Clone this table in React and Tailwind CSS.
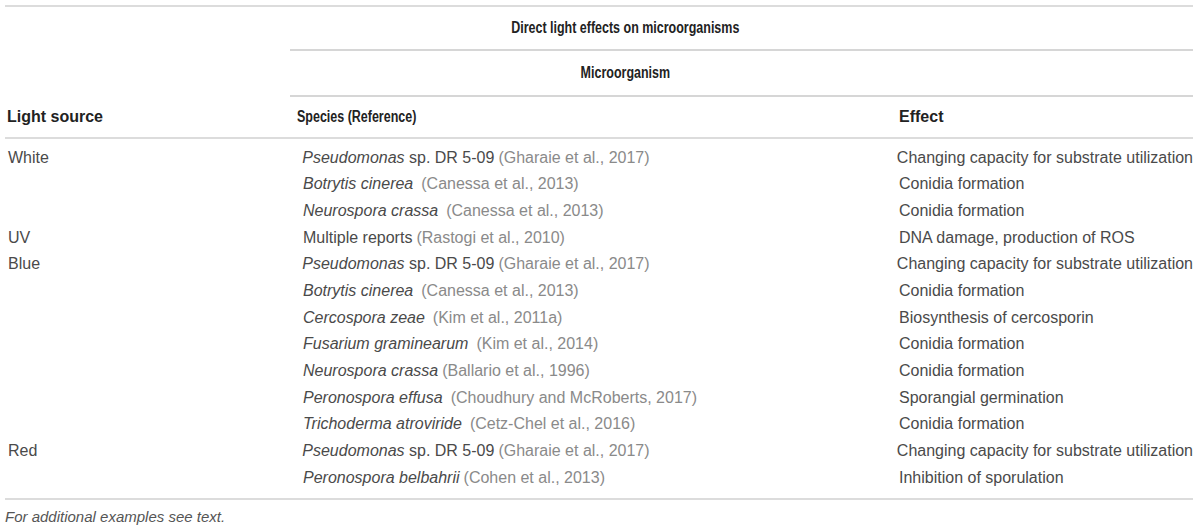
import React from "react";

// ── Data ───────────────────────────────────────────────────────────────────

const rows = [
  { light: "White", sp: "Pseudomonas", extra: " sp. DR 5-09", ref: "Gharaie et al., 2017", effect: "Changing capacity for substrate utilization" },
  { light: "", sp: "Botrytis cinerea", ref: "Canessa et al., 2013", gap: true, effect: "Conidia formation" },
  { light: "", sp: "Neurospora crassa", ref: "Canessa et al., 2013", gap: true, effect: "Conidia formation" },
  { light: "UV", plain: "Multiple reports", ref: "Rastogi et al., 2010", effect: "DNA damage, production of ROS" },
  { light: "Blue", sp: "Pseudomonas", extra: " sp. DR 5-09", ref: "Gharaie et al., 2017", effect: "Changing capacity for substrate utilization" },
  { light: "", sp: "Botrytis cinerea", ref: "Canessa et al., 2013", gap: true, effect: "Conidia formation" },
  { light: "", sp: "Cercospora zeae", ref: "Kim et al., 2011a", gap: true, effect: "Biosynthesis of cercosporin" },
  { light: "", sp: "Fusarium graminearum", ref: "Kim et al., 2014", gap: true, effect: "Conidia formation" },
  { light: "", sp: "Neurospora crassa", ref: "Ballario et al., 1996", effect: "Conidia formation" },
  { light: "", sp: "Peronospora effusa", ref: "Choudhury and McRoberts, 2017", gap: true, effect: "Sporangial germination" },
  { light: "", sp: "Trichoderma atroviride", ref: "Cetz-Chel et al., 2016", gap: true, effect: "Conidia formation" },
  { light: "Red", sp: "Pseudomonas", extra: " sp. DR 5-09", ref: "Gharaie et al., 2017", effect: "Changing capacity for substrate utilization" },
  { light: "", sp: "Peronospora belbahrii", ref: "Cohen et al., 2013", effect: "Inhibition of sporulation" },
];

// ── Page ───────────────────────────────────────────────────────────────────

export default function App() {
  return (
    <div className="h-[529px] w-[1200px] overflow-hidden bg-white pl-[5px] pt-[5px] text-[16px] text-[#4a4a4a] [font-family:'Liberation_Sans',Arial,sans-serif]">
      <div className="w-[1188px]">
        <div className="h-[2px] bg-[#dcdcdc]" />

        {/* Spanning headers (condensed bold) */}
        <div className="ml-[285px]">
          <div className="flex h-[42px] w-[670px] items-center justify-center">
            <span className="inline-block scale-x-[0.78] whitespace-nowrap font-bold text-[#222]">Direct light effects on microorganisms</span>
          </div>
          <div className="h-[2px] bg-[#d6d6d6]" />
          <div className="flex h-[44px] w-[670px] items-center justify-center">
            <span className="inline-block scale-x-[0.78] whitespace-nowrap font-bold text-[#222]">Microorganism</span>
          </div>
          <div className="h-[2px] bg-[#d6d6d6]" />
        </div>

        {/* Column headers */}
        <div className="flex h-[40px] items-center font-bold text-[#222]">
          <div className="w-[292px] pl-[2px]">Light source</div>
          <div className="w-[602px]">
            <span className="inline-block origin-left scale-x-[0.78] whitespace-nowrap">Species (Reference)</span>
          </div>
          <div>Effect</div>
        </div>
        <div className="h-[2px] bg-[#dcdcdc]" />

        {/* Body */}
        <div className="pb-[7px] pt-[5.5px]">
          {rows.map((r, i) => (
            <div key={i} className="flex h-[26.67px] items-center whitespace-nowrap">
              <div className="w-[298px] pl-[3px]">{r.light}</div>
              <div className="w-[596px]">
                {r.plain ? r.plain : <i>{r.sp}</i>}
                {r.extra}
                <span className={`text-[#8a8a8a] ${r.gap ? "ml-[8px]" : "ml-[4px]"}`}>({r.ref})</span>
              </div>
              <div>{r.effect}</div>
            </div>
          ))}
        </div>
        <div className="h-[2px] bg-[#dcdcdc]" />

        <div className="pt-[6px] text-[15px] italic text-[#555]">For additional examples see text.</div>
      </div>
    </div>
  );
}
